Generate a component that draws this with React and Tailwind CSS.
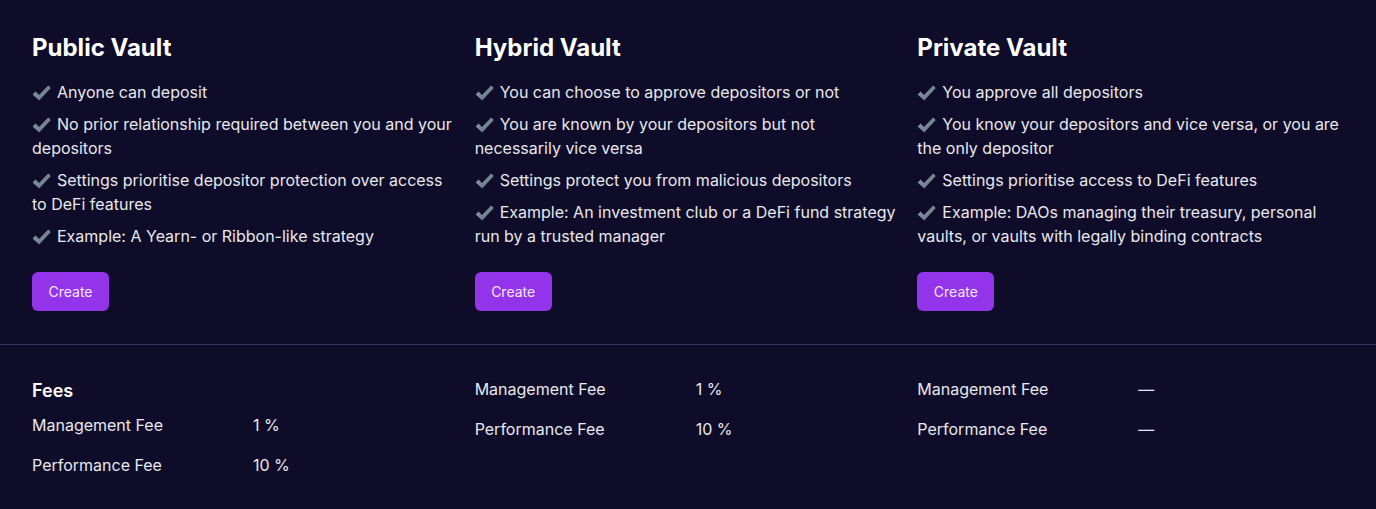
const vaults = [
  {
    title: 'Public Vault',
    points: [
      'Anyone can deposit',
      'No prior relationship required between you and your depositors',
      'Settings prioritise depositor protection over access to DeFi features',
      'Example: A Yearn- or Ribbon-like strategy',
    ],
    fees: { management: '1 %', performance: '10 %' },
    heading: true,
  },
  {
    title: 'Hybrid Vault',
    points: [
      'You can choose to approve depositors or not',
      'You are known by your depositors but not necessarily vice versa',
      'Settings protect you from malicious depositors',
      'Example: An investment club or a DeFi fund strategy run by a trusted manager',
    ],
    fees: { management: '1 %', performance: '10 %' },
  },
  {
    title: 'Private Vault',
    points: [
      'You approve all depositors',
      'You know your depositors and vice versa, or you are the only depositor',
      'Settings prioritise access to DeFi features',
      'Example: DAOs managing their treasury, personal vaults, or vaults with legally binding contracts',
    ],
    fees: { management: '—', performance: '—' },
  },
];

function Check() {
  return (
    <span className="inline-block w-[25px] align-[-3px]">
      <svg width="19" height="16" viewBox="0 0 19 16">
        <defs>
          <linearGradient id="chk" x1="0" y1="0" x2="1" y2="1">
            <stop offset="0" stopColor="#8fa1ad" />
            <stop offset="1" stopColor="#5d707c" />
          </linearGradient>
        </defs>
        <path d="M0.6 9.4 L3.6 6.6 L7 10 L16.2 0.4 L18.8 3 L7.2 15.4 Z" fill="url(#chk)" />
      </svg>
    </span>
  );
}

function FeeRow({ label, value }) {
  return (
    <div className="flex h-10 items-center">
      <div className="w-[221px]">{label}</div>
      <div>{value}</div>
    </div>
  );
}

export default function App() {
  return (
    <div
      className="min-h-[509px] bg-[#0e0c28] text-[#e8e8ee]"
      style={{ fontFamily: 'Inter, "Noto Sans", sans-serif' }}
    >
      <div className="grid grid-cols-3 gap-x-4 px-8 pt-[32px] pb-[33px]">
        {vaults.map(function (v) {
          return (
            <div key={v.title}>
              <h2 className="text-2xl leading-8 font-bold text-white">{v.title}</h2>
              <ul className="mt-4 flex flex-col gap-2 text-base leading-6">
                {v.points.map(function (p) {
                  return (
                    <li key={p}>
                      <Check />
                      {p}
                    </li>
                  );
                })}
              </ul>
              <button className="mt-6 h-[39px] w-[77px] rounded-md bg-[#9333ea] text-sm text-[#f3e8ff]">
                Create
              </button>
            </div>
          );
        })}
      </div>
      <div className="h-px bg-[#34345a]" />
      <div className="grid grid-cols-3 gap-x-4 px-8 pt-6 pb-6 text-base">
        {vaults.map(function (v) {
          return (
            <div key={v.title}>
              {v.heading ? (
                <h3 className="mt-2 text-lg leading-7 font-semibold text-white">Fees</h3>
              ) : null}
              <FeeRow label="Management Fee" value={v.fees.management} />
              <FeeRow label="Performance Fee" value={v.fees.performance} />
            </div>
          );
        })}
      </div>
    </div>
  );
}
